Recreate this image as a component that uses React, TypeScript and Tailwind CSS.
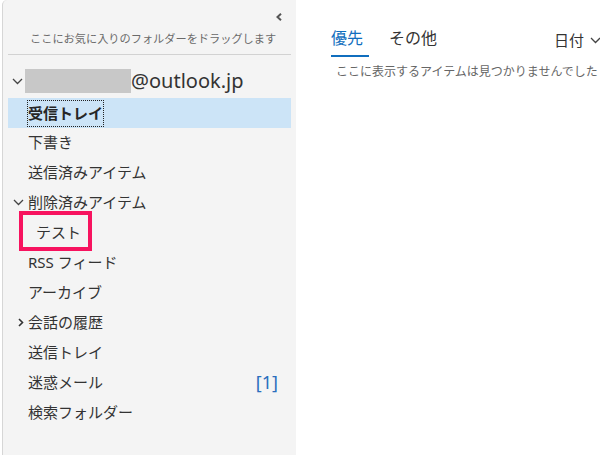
import React from 'react';

const font = "font-['Segoe_UI','Noto_Sans','Noto_Sans_CJK_JP',sans-serif]";

const ChevronDown = () => (
  <svg width="11" height="7" viewBox="0 0 11 7" fill="none">
    <path d="M1 1l4.5 4.5L10 1" stroke="#444" strokeWidth="1.3" />
  </svg>
);

const ChevronRight = () => (
  <svg width="6" height="9" viewBox="0 0 6 9" fill="none">
    <path d="M1 1l3.5 3.5L1 8" stroke="#333" strokeWidth="1.6" />
  </svg>
);

type Folder = {
  name: string;
  chevron?: 'down' | 'right';
  indent?: boolean;
  selected?: boolean;
  count?: string;
  marked?: boolean;
};

const folders: Folder[] = [
  { name: '受信トレイ', selected: true },
  { name: '下書き' },
  { name: '送信済みアイテム' },
  { name: '削除済みアイテム', chevron: 'down' },
  { name: 'テスト', indent: true, marked: true },
  { name: 'RSS フィード' },
  { name: 'アーカイブ' },
  { name: '会話の履歴', chevron: 'right' },
  { name: '送信トレイ' },
  { name: '迷惑メール', count: '[1]' },
  { name: '検索フォルダー' },
];

function FolderRow({ f }: { f: Folder }) {
  return (
    <div
      className={
        'relative flex h-[30px] items-center ml-[5px] w-[283px] text-[15px] pb-[2px] ' +
        (f.selected ? 'bg-[#cce4f7]' : '')
      }
    >
      <div className={(f.indent ? 'w-[28px]' : 'w-[20px]') + ' flex items-center shrink-0'}>
        {f.chevron === 'down' && (
          <span className="pl-[5px] flex">
            <ChevronDown />
          </span>
        )}
        {f.chevron === 'right' && (
          <span className="pl-[10px] flex">
            <ChevronRight />
          </span>
        )}
      </div>
      {f.selected ? (
        <span className="font-bold text-[#262626] outline-1 outline-dotted outline-[#222] leading-[25px] mt-[2px]">
          {f.name}
        </span>
      ) : (
        <span className="text-[#333]">{f.name}</span>
      )}
      {f.count && (
        <span className="ml-auto pr-[13px] text-[#2a6ebd] text-[18px] leading-[20px]">{f.count}</span>
      )}
      {f.marked && (
        <div className="absolute left-[11px] top-[-7px] w-[73px] h-[40px] border-[4px] border-[#f7135f]" />
      )}
    </div>
  );
}

export default function App() {
  return (
    <div className={`${font} flex w-[600px] h-[455px] overflow-hidden bg-white`}>
      <aside className="ml-[2px] w-[294px] shrink-0 bg-[#f4f4f4] border-l border-[#d6d6d6] rounded-tl-[5px]">
        <div className="h-[30px] flex items-center justify-end pr-[14px] pt-[4px]">
          <svg width="6" height="8" viewBox="0 0 6 8">
            <path d="M5 0.8L1.5 4 5 7.2" stroke="#555" strokeWidth="2" fill="none" />
          </svg>
        </div>
        <div className="h-[18px] leading-[18px] pl-[27px] text-[11.2px] text-[#6a6a6a] whitespace-nowrap">
          ここにお気に入りのフォルダーをドラッグします
        </div>
        <div className="mt-[6px] ml-[5px] w-[283px] h-px bg-[#d2d2d2]" />
        <div className="mt-[14px] mb-[5px] h-[24px] flex items-center ml-[5px]">
          <span className="pl-[4px] pr-[2px] flex">
            <ChevronDown />
          </span>
          <div className="w-[106px] h-[24px] bg-[#c8c8c8]" />
          <span className="text-[20px] text-[#333] leading-[24px]">@outlook.jp</span>
        </div>
        <div className="flex flex-col">
          {folders.map((f) => (
            <FolderRow key={f.name} f={f} />
          ))}
        </div>
      </aside>
      <main className="w-[310px] shrink-0">
        <div className="flex items-start pt-[26px] pl-[35px] pr-[5px]">
          <div className="flex flex-col w-[38px]">
            <span className="text-[16px] leading-[24px] h-[24px] text-[#106ebe]">優先</span>
            <div className="mt-[5px] h-[2px] bg-[#106ebe]" />
          </div>
          <span className="ml-[20px] text-[16px] leading-[24px] text-[#333]">その他</span>
          <div className="ml-auto flex items-center gap-[6px] mt-[2px]">
            <span className="text-[15px] leading-[24px] text-[#333]">日付</span>
            <ChevronDown />
          </div>
        </div>
        <div className="mt-[7px] pl-[40px] text-[12px] leading-[16px] text-[#666] whitespace-nowrap">
          ここに表示するアイテムは見つかりませんでした
        </div>
      </main>
    </div>
  );
}
